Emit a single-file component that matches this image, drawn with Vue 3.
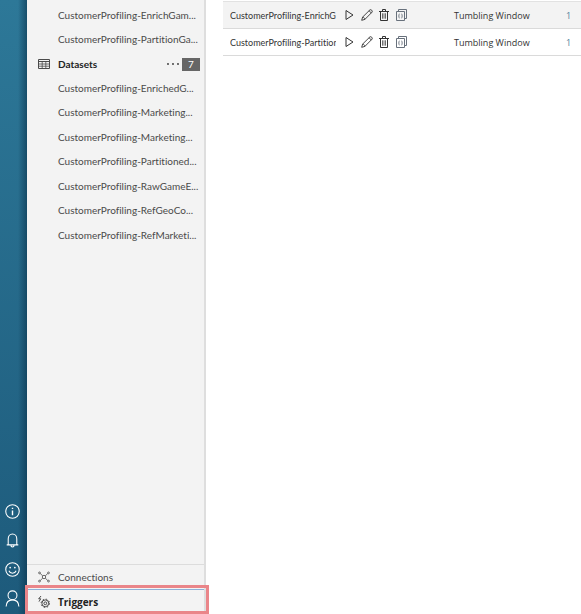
<script setup>
const pipelines = [
  'CustomerProfiling-EnrichGam...',
  'CustomerProfiling-PartitionGa...',
]
const datasets = [
  'CustomerProfiling-EnrichedG...',
  'CustomerProfiling-Marketing...',
  'CustomerProfiling-Marketing...',
  'CustomerProfiling-Partitioned...',
  'CustomerProfiling-RawGameE...',
  'CustomerProfiling-RefGeoCo...',
  'CustomerProfiling-RefMarketi...',
]
const triggers = [
  { name: 'CustomerProfiling-EnrichG', type: 'Tumbling Window', count: 1 },
  { name: 'CustomerProfiling-Partition', type: 'Tumbling Window', count: 1 },
]
</script>

<template>
  <div class="app">
    <nav class="rail" aria-label="Global">
      <button type="button" aria-label="Information">
        <svg viewBox="0 0 14 14"><circle cx="7" cy="7" r="6.3" /><path d="M7 6v4.5M7 3.4v1.3" stroke-width="1.3" /></svg>
      </button>
      <button type="button" aria-label="Notifications">
        <svg viewBox="0 0 14 14"><path d="M1.6 11.1h10.8M3 11V5.5C3 2.900 4.700 1 7 1s4 1.900 4 4.500V11M5.500 11.200c0 2.500 3 2.500 3 0" /></svg>
      </button>
      <button type="button" aria-label="Feedback">
        <svg viewBox="0 0 14 14"><circle cx="7" cy="7" r="6.3" /><path d="M3.600 8.200c1.200 3 5.600 3 6.800 0" /><circle cx="4.800" cy="5.200" r=".8" class="solid" /><circle cx="9.200" cy="5.200" r=".8" class="solid" /></svg>
      </button>
      <button type="button" aria-label="Account">
        <svg class="person" viewBox="0 0 14 16"><circle cx="7" cy="5" r="4.200" /><path d="M1 15.500C1.200 11.500 3.800 9.300 7 9.300s5.800 2.200 6 6.200" /></svg>
      </button>
    </nav>

    <aside class="sidebar">
      <ul class="items">
        <li v-for="(item, i) in pipelines" :key="i"><a href="#">{{ item }}</a></li>
      </ul>
      <div class="group">
        <svg class="icon" viewBox="0 0 12 12"><path d="M.5 1.500h11v9H.5zM.5 3.500h11" /><path d="M.5 6h11M.5 8.200h11M4.200 3.500v7M7.800 3.500v7" stroke-width=".8" /></svg>
        <span class="title">Datasets</span>
        <button type="button" class="more" aria-label="Datasets actions">
          <svg viewBox="0 0 12 4"><circle cx="1" cy="2" r=".9" /><circle cx="6" cy="2" r=".9" /><circle cx="11" cy="2" r=".9" /></svg>
        </button>
        <span class="badge">7</span>
      </div>
      <ul class="items">
        <li v-for="(item, i) in datasets" :key="i"><a href="#">{{ item }}</a></li>
      </ul>
      <div class="bottom">
        <a href="#" class="link">
          <svg class="icon thin" viewBox="0 0 12 12"><path d="M2.200 2.500 4.700 4.800M9.800 2.500 7.300 4.800M2.200 9.500l2.500-2.300M9.800 9.500 7.300 7.200" /><circle cx="6" cy="6" r="1.700" /><circle cx="1.500" cy="1.900" r=".9" /><circle cx="10.500" cy="1.900" r=".9" /><circle cx="1.500" cy="10.100" r=".9" /><circle cx="10.500" cy="10.100" r=".9" /></svg>
          Connections
        </a>
        <a href="#" class="link active">
          <svg class="icon thin" viewBox="0 0 12 12"><circle cx="7.300" cy="7.300" r="3.400" /><circle cx="7.300" cy="7.300" r="1.400" /><circle cx="7.300" cy="7.300" r="4.200" stroke-dasharray="1.500 1.800" /><path d="M3 0 .7 2.800h2L1 5.600" /></svg>
          Triggers
        </a>
      </div>
    </aside>

    <main class="content">
      <table>
        <tbody>
          <tr v-for="(t, i) in triggers" :key="i">
            <td class="name"><div class="clip">{{ t.name }}</div></td>
            <td class="actions">
              <div class="tools">
                <button type="button" aria-label="Run">
                  <svg viewBox="0 0 12 12"><path d="M2 1.500v9L9 6z" /></svg>
                </button>
                <button type="button" aria-label="Edit">
                  <svg viewBox="0 0 12 12"><path d="M.7 11.300l.9-3.200L8.900.9c1-.9 3.100 1 2.200 2.200L3.900 10.400zM1.600 8.100c1.300.2 2 .9 2.300 2.300M7.800 2c1.200.2 2 1 2.200 2.200" stroke-width=".9" /></svg>
                </button>
                <button type="button" aria-label="Delete">
                  <svg viewBox="0 0 12 12"><path d="M1 2.500h10M4.500 2.300V.5h3v1.800M2.500 2.700v8.800h7V2.700" /><path d="M4.500 4.300v5.400M6 4.300v5.400M7.500 4.300v5.400" stroke-width=".7" /></svg>
                </button>
                <button type="button" class="code" aria-label="View code">
                  <svg viewBox="0 0 12 12"><path d="M1.500 2.500h8v9h-8zM3.500 2.400V.5h8v9H9.700" /><path d="M4.700 4.900c-1 0-.6.900-.6 1.500 0 .4-.3.600-.7.600.4 0 .7.200.7.600 0 .6-.4 1.500.6 1.500M6.300 4.900c1 0 .6.900.6 1.500 0 .4.300.6.700.6-.4 0-.7.200-.7.600 0 .6.400 1.500-.6 1.500" stroke-width=".8" /></svg>
                </button>
              </div>
            </td>
            <td class="type">{{ t.type }}</td>
            <td class="count"><a href="#">{{ t.count }}</a></td>
          </tr>
        </tbody>
      </table>
    </main>
  </div>
</template>

<style>
body {
  margin: 0;
  background: #fff;
}
</style>

<style scoped>
.app {
  display: flex;
  min-height: 100vh;
  overflow: hidden;
  font-family: Lato, "Open Sans", sans-serif;
  font-size: 10px;
  font-variant-ligatures: none;
  color: #4a4a4a;
}
button {
  display: flex;
  align-items: center;
  justify-content: center;
  padding: 0;
  border: 0;
  background: none;
  color: inherit;
  font: inherit;
}
a {
  color: inherit;
  text-decoration: none;
}
svg {
  display: block;
  fill: none;
  stroke: currentColor;
}
.rail {
  display: flex;
  flex: none;
  flex-direction: column;
  justify-content: flex-end;
  box-sizing: border-box;
  width: 27px;
  padding-bottom: 1px;
  background:
    linear-gradient(90deg, transparent 18px, rgba(10, 50, 75, 0.6)),
    linear-gradient(#2d7898, #1d5a7b);
  color: #fff;
}
.rail button {
  width: 25px;
  height: 29px;
}
.rail svg {
  width: 15px;
  height: 15px;
}
.rail .person {
  height: 17px;
}
.rail .solid {
  fill: currentColor;
  stroke: none;
}
.sidebar {
  display: flex;
  flex: none;
  flex-direction: column;
  box-sizing: border-box;
  width: 179px;
  padding-top: 3px;
  border-right: 2px solid #dedede;
  background: #f3f3f3;
}
.items {
  margin: 0;
  padding: 0 0 0 31px;
  list-style: none;
}
.items li {
  height: 24px;
  line-height: 24px;
  white-space: nowrap;
}
.items li:nth-child(even) {
  height: 25px;
}
.icon {
  flex: none;
  width: 12px;
  height: 12px;
  margin-right: 8px;
}
.thin {
  stroke-width: 0.8;
}
.group {
  display: flex;
  align-items: center;
  height: 24px;
  padding: 0 4px 0 11px;
}
.title {
  flex: 1;
  color: #222;
  font-weight: 700;
}
.more {
  width: 14px;
  height: 14px;
  margin-right: 2px;
}
.more svg {
  width: 12px;
  height: 4px;
  fill: #333;
  stroke: none;
}
.badge {
  width: 18px;
  background: #666;
  color: #fff;
  line-height: 13px;
  text-align: center;
}
.bottom {
  margin-top: auto;
  border-top: 1px solid #dcdcdc;
}
.link {
  display: flex;
  align-items: center;
  height: 24px;
  padding-left: 11px;
}
.active {
  position: relative;
  border-top: 1px solid #8fb0d8;
  color: #222;
  font-family: "Open Sans", sans-serif;
  font-weight: 700;
}
.active::after {
  position: absolute;
  inset: -5px -5px 0 -2px;
  border: 3px solid #ea8589;
  content: "";
}
.content {
  flex: 1;
  min-width: 0;
  padding: 1px 0 0 17px;
}
table {
  width: 100%;
  border-collapse: collapse;
  font-size: 9px;
  table-layout: fixed;
}
tr {
  height: 27px;
  border-bottom: 1px solid #dadada;
}
tr:first-child {
  border-top: 1px solid #e2e2e2;
  background: #f3f3f3;
}
td {
  padding: 0;
  color: #333;
}
.name {
  width: 113px;
}
.clip {
  margin-left: 7px;
  overflow: hidden;
  white-space: nowrap;
}
.actions {
  width: 118px;
}
.tools {
  display: flex;
  gap: 5px;
  padding-left: 8px;
}
.tools svg {
  width: 12px;
  height: 12px;
}
.code {
  color: #68717c;
}
.type,
.count {
  font-family: "Open Sans", sans-serif;
}
.count {
  width: 10px;
  padding-right: 5px;
}
.count a {
  color: #50809a;
}
</style>
